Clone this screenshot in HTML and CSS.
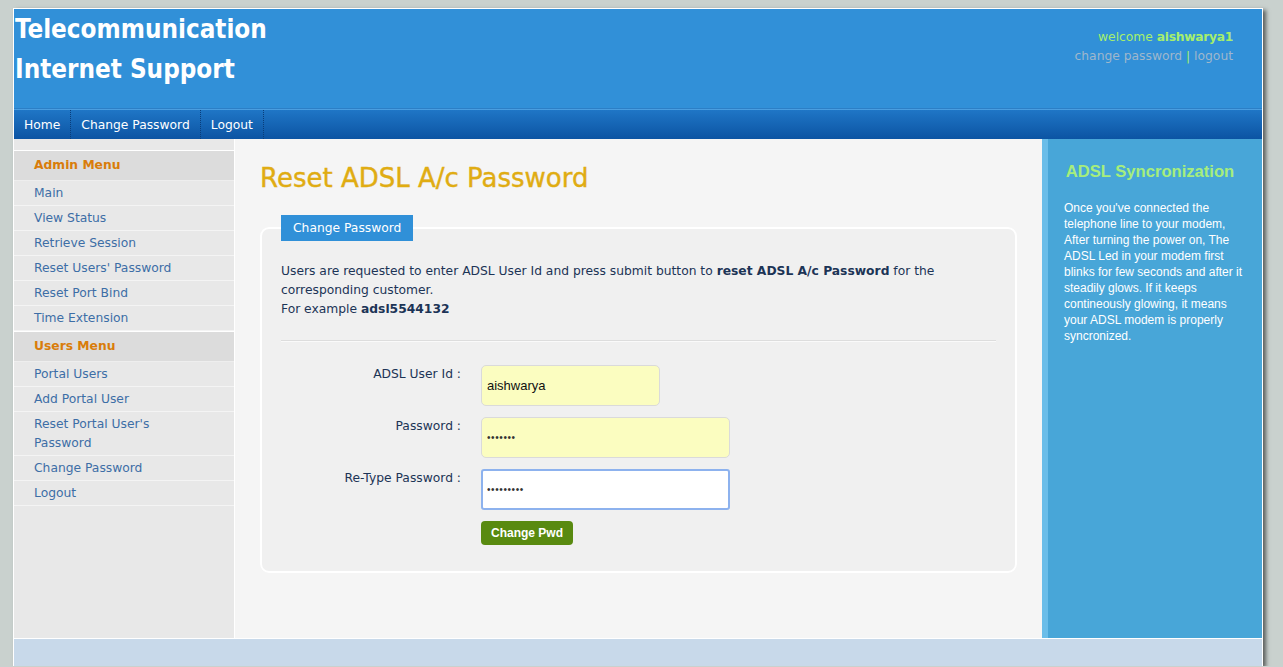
FILE: index.html
```html
<!DOCTYPE html>
<html>
<head>
<meta charset="utf-8">
<title>Telecommunication Internet Support</title>
<link rel="stylesheet" href="styles.css">
</head>
<body>
<div class="page">
  <header class="header">
    <h1 class="site-title">Telecommunication<br>Internet Support</h1>
    <div class="user-box">
      <div class="welcome">welcome <b>aishwarya1</b></div>
      <div class="user-links"><a href="#">change password</a> <span class="sep">|</span> <a href="#">logout</a></div>
    </div>
  </header>
  <nav class="nav">
    <a href="#" class="nav-item">Home</a>
    <a href="#" class="nav-item">Change Password</a>
    <a href="#" class="nav-item">Logout</a>
  </nav>
  <div class="body-row">
    <aside class="sidebar">
      <div class="menu-head">Admin Menu</div>
      <a href="#" class="menu-item">Main</a>
      <a href="#" class="menu-item">View Status</a>
      <a href="#" class="menu-item">Retrieve Session</a>
      <a href="#" class="menu-item">Reset Users' Password</a>
      <a href="#" class="menu-item">Reset Port Bind</a>
      <a href="#" class="menu-item">Time Extension</a>
      <div class="menu-head">Users Menu</div>
      <a href="#" class="menu-item">Portal Users</a>
      <a href="#" class="menu-item">Add Portal User</a>
      <a href="#" class="menu-item">Reset Portal User's<br>Password</a>
      <a href="#" class="menu-item">Change Password</a>
      <a href="#" class="menu-item">Logout</a>
    </aside>
    <main class="main">
      <h2 class="page-title">Reset ADSL A/c Password</h2>
      <fieldset class="box">
        <legend class="box-legend">Change Password</legend>
        <p class="intro"><span>Users are requested to enter ADSL User Id and press submit button to <b>reset ADSL A/c Password</b> for the</span><br><span>corresponding customer.</span><br><span>For example <b>adsl5544132</b></span></p>
        <div class="rule"></div>
        <div class="form">
          <label class="lbl">ADSL User Id :</label>
          <div class="field"><input class="inp inp-short" type="text" value="aishwarya"></div>
          <label class="lbl">Password :</label>
          <div class="field"><input class="inp inp-pw" type="password" value="1234567"></div>
          <label class="lbl">Re-Type Password :</label>
          <div class="field"><input class="inp inp-pw inp-focus" type="password" value="123456789"></div>
          <div></div>
          <div class="field"><button class="btn" type="button">Change Pwd</button></div>
        </div>
      </fieldset>
    </main>
    <aside class="info">
      <h3 class="info-title">ADSL Syncronization</h3>
      <p class="info-text">Once you've connected the telephone line to your modem, After turning the power on, The ADSL Led in your modem first blinks for few seconds and after it steadily glows. If it keeps contineously glowing, it means your ADSL modem is properly syncronized.</p>
    </aside>
  </div>
  <footer class="footer"></footer>
</div>
</body>
</html>
```
FILE: styles.css
```css
html, body {
  margin: 0;
  padding: 0;
}
body {
  background: #c9d1ce;
  font-family: "DejaVu Sans", "Liberation Sans", sans-serif;
  font-size: 12.3px;
  padding: 8px 0 0 13px;
}
.page {
  width: 1248px;
  border: 1px solid #ffffff;
  border-bottom: 0;
  box-shadow: 3px 2px 4px rgba(0, 0, 0, 0.55);
  background: #f5f5f5;
}
.header {
  height: 99px;
  background: #3190d8;
  display: flex;
  justify-content: space-between;
  border-bottom: 1px solid #2c7fc6;
}
.site-title {
  margin: 0;
  padding: 0 0 0 1px;
  color: #ffffff;
  font-family: "DejaVu Sans Condensed", "DejaVu Sans", sans-serif;
  font-stretch: condensed;
  font-size: 25.8px;
  line-height: 40px;
  font-weight: bold;
}
.user-box {
  padding: 19px 29px 0 0;
  text-align: right;
  line-height: 19px;
}
.welcome {
  color: #a6ef6c;
}
.welcome b {
  letter-spacing: -0.3px;
}
.user-links {
  color: #a6ef6c;
}
.user-links a {
  color: #9fb7cc;
  text-decoration: none;
}
.nav {
  height: 29px;
  border-top: 1px solid #4b9ee0;
  background: linear-gradient(#1f76c6, #0c54a3);
  display: flex;
}
.nav-item {
  color: #ffffff;
  text-decoration: none;
  line-height: 29px;
  padding: 1px 10px 0 10px;
  border-right: 1px dotted #0a3d78;
}
.body-row {
  display: flex;
  min-height: 499px;
}
.sidebar {
  width: 220px;
  flex: none;
  background: #e8e8e8;
  border-right: 1px solid #ffffff;
  padding-top: 11px;
  display: flex;
  flex-direction: column;
  padding-bottom: 20px;
}
.menu-head {
  background: #dcdcdc;
  border-top: 1px solid #ffffff;
  border-bottom: 1px solid #eeeeee;
  color: #d97c0a;
  font-weight: bold;
  line-height: 29px;
  padding-left: 20px;
}
.menu-item {
  color: #3d6ea6;
  text-decoration: none;
  padding: 3px 0 2px 20px;
  line-height: 19px;
  border-bottom: 1px solid #f4f4f4;
}
.main {
  flex: 1;
  background: #f5f5f5;
  padding: 0 25px 40px 25px;
}
.page-title {
  margin: 24px 0 0 0;
  color: #e0ac12;
  font-size: 26px;
  font-weight: normal;
  line-height: 30px;
  -webkit-text-stroke: 0.4px #e0ac12;
}
.box {
  margin: 22px 0 0 0;
  border: 2px solid #ffffff;
  border-radius: 9px;
  background: #f0f0f0;
  padding: 0 19px 26px 19px;
}
.box-legend {
  background: #3090d8;
  color: #ffffff;
  padding: 0 12px;
  line-height: 26px;
  margin-left: 0;
}
.intro {
  margin: 21px 0 0 0;
  line-height: 19px;
  color: #1c3456;
}
.rule {
  margin-top: 21px;
  border-top: 1px solid #dddddd;
  border-bottom: 1px solid #fafafa;
}
.form {
  display: grid;
  grid-template-columns: 180px auto;
  column-gap: 20px;
  row-gap: 11px;
  margin-top: 23px;
}
.lbl {
  text-align: right;
  color: #1c3456;
  line-height: 19px;
}
.field {
  display: flex;
}
.inp {
  box-sizing: border-box;
  width: 249px;
  height: 41px;
  background: #fbfdc0;
  border: 1px solid #dadada;
  border-radius: 5px;
  padding: 0 5px;
  font-family: "Liberation Sans", Arial, sans-serif;
  font-size: 13px;
  color: #111111;
  outline: none;
}
.inp-pw {
  font-size: 10px;
  color: #333333;
  letter-spacing: 0.6px;
}
.inp-short {
  width: 179px;
}
.inp-focus {
  background: #ffffff;
  border: 2px solid #8db2ee;
  border-radius: 3px;
  padding-left: 4px;
}
.btn {
  background: #598a10;
  color: #ffffff;
  border: 0;
  border-radius: 4px;
  height: 24px;
  padding: 0 10px;
  font-family: "Liberation Sans", Arial, sans-serif;
  font-weight: bold;
  font-size: 12px;
}
.info {
  flex: none;
  background: #48a6d8;
  border-left: 6px solid #6abde9;
  padding: 0 14px 0 16px;
  box-sizing: border-box;
  width: 220px;
  font-family: "Liberation Sans", Arial, sans-serif;
}
.info-title {
  margin: 23px 12px 0 0;
  text-align: center;
  color: #a6ee7c;
  font-size: 16.6px;
  line-height: 20px;
  font-weight: bold;
}
.info-text {
  margin: 18px 0 0 0;
  color: #ffffff;
  font-size: 12px;
  line-height: 16px;
}
.footer {
  height: 27px;
  border-top: 1px solid #ffffff;
  background: #c8d9ea;
}
```
